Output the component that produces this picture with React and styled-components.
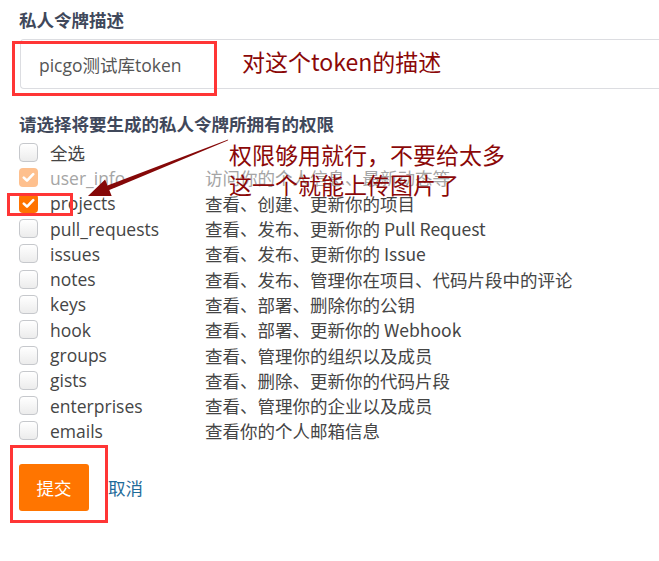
import React from 'react';
import styled, { createGlobalStyle } from 'styled-components';

const GlobalStyle = createGlobalStyle`
  html, body {
    margin: 0;
    padding: 0;
    background: #fff;
    overflow: hidden;
  }
  body {
    font-family: 'Open Sans', 'Noto Sans CJK SC', sans-serif;
  }
`;

const Page = styled.div`
  position: relative;
  width: 659px;
  height: 561px;
  padding: 8px 0 0 19px;
  box-sizing: border-box;
`;

const Heading = styled.div`
  font-size: 17.5px;
  font-weight: 700;
  line-height: 24px;
  color: #40485b;
  font-family: 'Noto Sans CJK SC', sans-serif;
`;

// the field runs on past the right edge in the shot, so no right border
const TokenInput = styled.input`
  display: block;
  width: 640px;
  height: 50px;
  margin: 7px 0 0 1px;
  padding: 0 18px;
  box-sizing: border-box;
  border: 1px solid #dcdde1;
  border-right: none;
  border-radius: 4px 0 0 4px;
  font-family: 'Open Sans', 'Noto Sans CJK SC', sans-serif;
  font-size: 17.5px;
  color: #555;
  outline: none;
  background: #fff;
`;

const ScopeHeading = styled(Heading)`
  margin-top: 23px;
`;

const ScopeList = styled.div`
  margin-top: 4px;
  display: flex;
  flex-direction: column;
`;

const Row = styled.label`
  display: flex;
  align-items: center;
  height: 25.3px;
  font-size: 17.5px;
  color: ${(p) => (p.disabled ? '#a5a5a5' : '#454545')};
`;

const Box = styled.span`
  width: 19px;
  height: 19px;
  box-sizing: border-box;
  border-radius: 4px;
  flex: none;
  display: flex;
  align-items: center;
  justify-content: center;
  border: 1px solid ${(p) => (p.checked ? 'transparent' : '#c6c8cc')};
  background: ${(p) =>
    p.checked ? (p.disabled ? '#fec08e' : '#ff7300') : 'linear-gradient(#ffffff, #ececec)'};
`;

const Name = styled.span`
  width: 155px;
  margin-left: 12px;
  flex: none;
`;

const Desc = styled.span`
  font-family: 'Noto Sans CJK SC', 'Open Sans', sans-serif;
  white-space: nowrap;
`;

const Actions = styled.div`
  display: flex;
  align-items: center;
  gap: 19px;
  margin-top: 20px;
`;

const SubmitBtn = styled.button`
  width: 70px;
  height: 47px;
  border: none;
  border-radius: 3px;
  background: #ff7500;
  color: #fff;
  font-size: 17.5px;
  font-family: 'Noto Sans CJK SC', sans-serif;
  cursor: pointer;
`;

const CancelLink = styled.a`
  font-size: 17.5px;
  color: #1f6c9a;
  font-family: 'Noto Sans CJK SC', sans-serif;
  cursor: pointer;
`;

// red boxes + notes drawn over the form
const Frame = styled.div`
  position: absolute;
  border: 3px solid #ff3535;
  box-sizing: border-box;
  pointer-events: none;
`;

const Note = styled.div`
  position: absolute;
  color: #8b0808;
  font-family: 'Noto Sans CJK SC', sans-serif;
  font-size: 23px;
  line-height: 29px;
  white-space: nowrap;
`;

const Arrow = styled.svg`
  position: absolute;
  left: 0;
  top: 0;
  pointer-events: none;
`;

const Check = () => (
  <svg width='13' height='11' viewBox='0 0 13 11'>
    <polyline points='1.8,5.6 5,8.6 11.2,2.2' fill='none' stroke='#fff' strokeWidth='2.6' strokeLinecap='round' strokeLinejoin='round' />
  </svg>
);

const scopes = [
  { name: '全选', desc: '' },
  { name: 'user_info', desc: '访问你的个人信息、最新动态等', checked: true, disabled: true },
  { name: 'projects', desc: '查看、创建、更新你的项目', checked: true },
  { name: 'pull_requests', desc: '查看、发布、更新你的 Pull Request' },
  { name: 'issues', desc: '查看、发布、更新你的 Issue' },
  { name: 'notes', desc: '查看、发布、管理你在项目、代码片段中的评论' },
  { name: 'keys', desc: '查看、部署、删除你的公钥' },
  { name: 'hook', desc: '查看、部署、更新你的 Webhook' },
  { name: 'groups', desc: '查看、管理你的组织以及成员' },
  { name: 'gists', desc: '查看、删除、更新你的代码片段' },
  { name: 'enterprises', desc: '查看、管理你的企业以及成员' },
  { name: 'emails', desc: '查看你的个人邮箱信息' },
];

const App = () => {
  return (
    <Page>
      <GlobalStyle />
      <Heading>私人令牌描述</Heading>
      <TokenInput defaultValue='picgo测试库token' />
      <ScopeHeading>请选择将要生成的私人令牌所拥有的权限</ScopeHeading>
      <ScopeList>
        {scopes.map((s) => (
          <Row key={s.name} disabled={s.disabled}>
            <Box checked={s.checked} disabled={s.disabled}>
              {s.checked && <Check />}
            </Box>
            <Name>{s.name}</Name>
            <Desc>{s.desc}</Desc>
          </Row>
        ))}
      </ScopeList>
      <Actions>
        <SubmitBtn>提交</SubmitBtn>
        <CancelLink>取消</CancelLink>
      </Actions>

      <Frame style={{ left: 12, top: 41, width: 205, height: 55 }} />
      <Frame style={{ left: 7, top: 193, width: 66, height: 23 }} />
      <Frame style={{ left: 10, top: 445, width: 98, height: 78 }} />

      <Note style={{ left: 242, top: 47 }}>对这个token的描述</Note>
      <Note style={{ left: 229, top: 140 }}>权限够用就行，不要给太多</Note>
      <Note style={{ left: 229, top: 170 }}>这一个就能上传图片了</Note>

      <Arrow width='659' height='561'>
        <polygon
          points='228.2,139.6 227.8,140.4 109.3,190.1 111.7,196.1 88,196 105.1,179.5 107.5,185.5'
          fill='#850808'
        />
      </Arrow>
    </Page>
  );
};

export default App;
